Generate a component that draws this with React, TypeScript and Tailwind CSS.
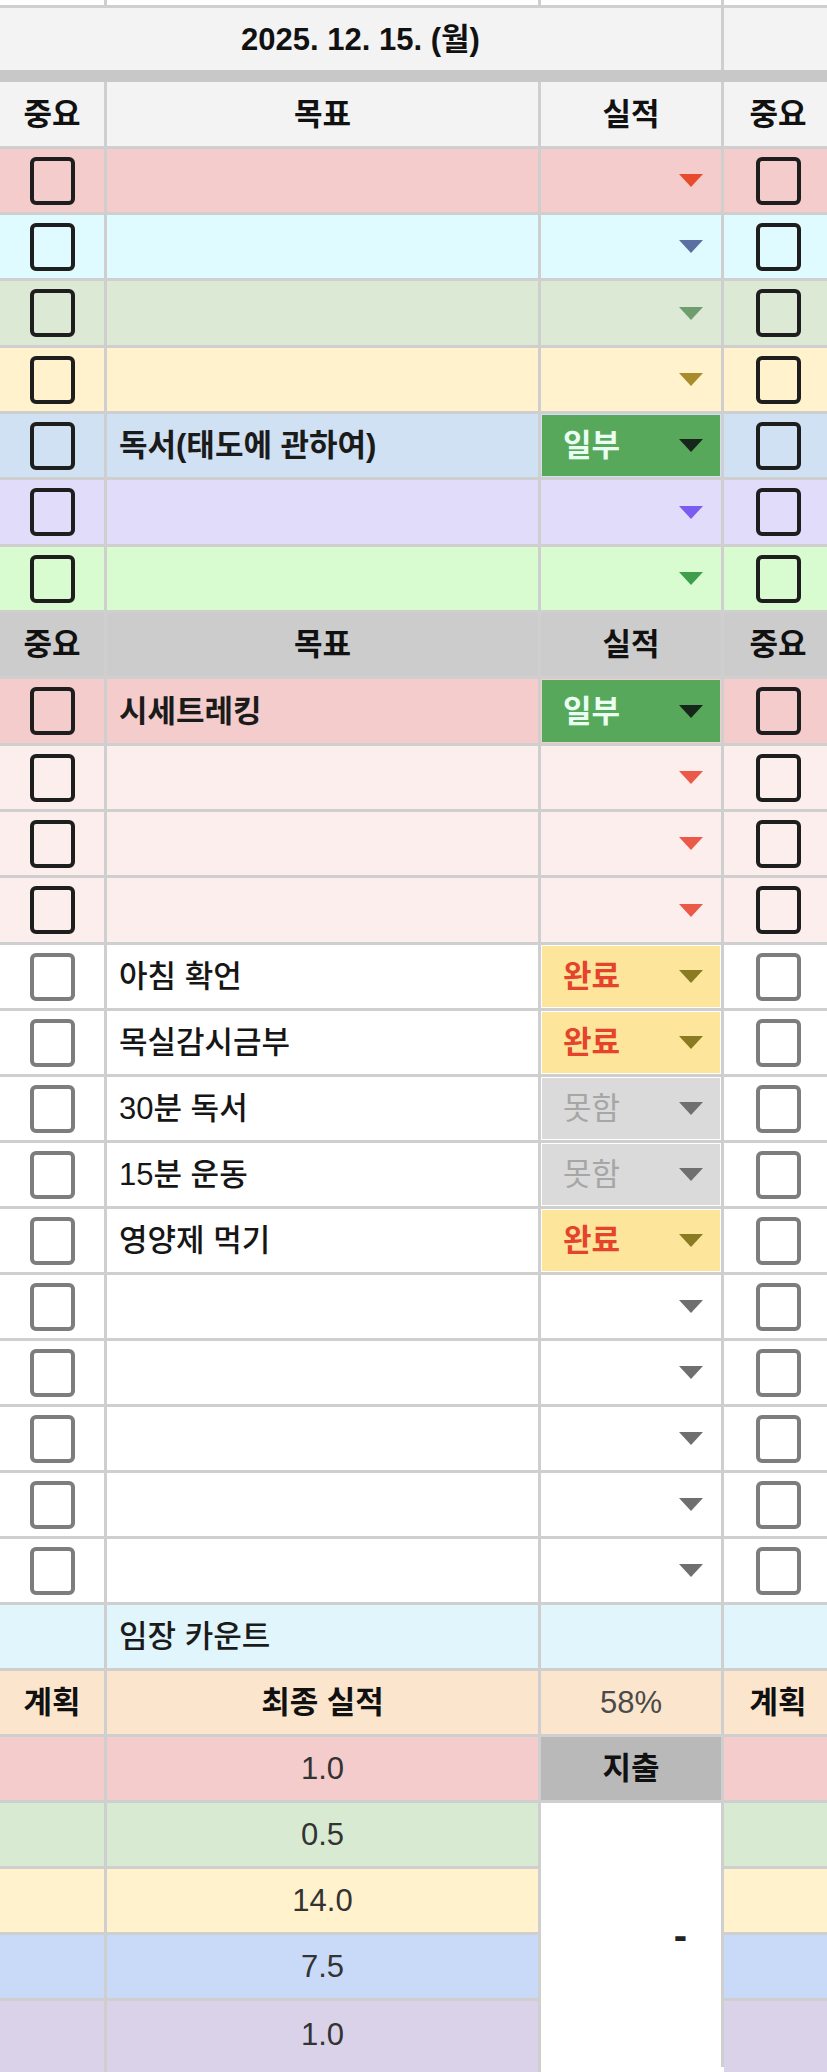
import React from "react";

const FONT = { fontFamily: '"Liberation Sans", "Noto Sans CJK KR", sans-serif' };

function Tri({ color }: { color: string }) {
  return (
    <svg width="24" height="13" viewBox="0 0 24 13" className="shrink-0">
      <polygon points="0,0 24,0 12,13" fill={color} />
    </svg>
  );
}

function Box({ dark }: { dark: boolean }) {
  return (
    <div
      className={
        dark
          ? "w-[45px] h-[48px] rounded-[6px] border-[4px] border-[#1e1e1e]"
          : "w-[45px] h-[48px] rounded-[6px] border-[4px] border-[#7d7d7d]"
      }
    />
  );
}

type Chip = "일부" | "완료" | "못함" | null;

function Status({ chip, tri }: { chip: Chip; tri: string }) {
  if (chip === "일부") {
    return (
      <div className="m-[1px] flex flex-1 items-center justify-between self-stretch bg-[#57a85b] pl-[21px] pr-[17px]">
        <span className="font-bold text-[#e9fff1]">일부</span>
        <Tri color="#16261a" />
      </div>
    );
  }
  if (chip === "완료") {
    return (
      <div className="m-[1px] flex flex-1 items-center justify-between self-stretch bg-[#fde69b] pl-[21px] pr-[17px]">
        <span className="font-bold text-[#e5432c]">완료</span>
        <Tri color="#8a7a22" />
      </div>
    );
  }
  if (chip === "못함") {
    return (
      <div className="m-[1px] flex flex-1 items-center justify-between self-stretch bg-[#dadada] pl-[21px] pr-[17px]">
        <span className="text-[#a6a6a6]">못함</span>
        <Tri color="#6f6f6f" />
      </div>
    );
  }
  return (
    <div className="m-[1px] flex flex-1 items-center justify-end self-stretch pr-[17px]">
      <Tri color={tri} />
    </div>
  );
}

type TaskRow = {
  h: string;
  bg: string;
  text?: string;
  bold?: boolean;
  chip?: Chip;
  tri: string;
  dark: boolean;
};

function Task({ r }: { r: TaskRow }) {
  return (
    <div className={`flex border-b-[3px] border-[#cfcfcf] ${r.h} ${r.bg}`}>
      <div className="flex w-[107px] shrink-0 items-center justify-center border-r-[3px] border-[#cfcfcf]">
        <Box dark={r.dark} />
      </div>
      <div className="flex w-[434px] shrink-0 items-center border-r-[3px] border-[#cfcfcf] pl-[12px]">
        <span className={r.bold ? "font-bold text-[#1b1b1b]" : "font-medium text-[#161616]"}>{r.text ?? ""}</span>
      </div>
      <div className="flex w-[183px] shrink-0 items-center border-r-[3px] border-[#cfcfcf]">
        <Status chip={r.chip ?? null} tri={r.tri} />
      </div>
      <div className="flex w-[108px] shrink-0 items-center justify-center">
        <Box dark={r.dark} />
      </div>
    </div>
  );
}

function Header({ bg, h }: { bg: string; h: string }) {
  return (
    <div className={`flex border-b-[3px] border-[#cfcfcf] font-bold text-[#111] ${h} ${bg}`}>
      <div className="flex w-[107px] shrink-0 items-center justify-center border-r-[3px] border-[#cfcfcf]">중요</div>
      <div className="flex w-[434px] shrink-0 items-center justify-center border-r-[3px] border-[#cfcfcf]">목표</div>
      <div className="flex w-[183px] shrink-0 items-center justify-center border-r-[3px] border-[#cfcfcf]">실적</div>
      <div className="flex w-[108px] shrink-0 items-center justify-center">중요</div>
    </div>
  );
}

const top: TaskRow[] = [
  { h: "h-[66px]", bg: "bg-[#f4cccc]", tri: "#e84a2e", dark: true },
  { h: "h-[66px]", bg: "bg-[#e0fbff]", tri: "#5b6fa3", dark: true },
  { h: "h-[67px]", bg: "bg-[#dce9d5]", tri: "#6e9e6e", dark: true },
  { h: "h-[66px]", bg: "bg-[#fff2cc]", tri: "#a88c2c", dark: true },
  { h: "h-[66px]", bg: "bg-[#d0e1f3]", text: "독서(태도에 관하여)", bold: true, chip: "일부", tri: "#000", dark: true },
  { h: "h-[67px]", bg: "bg-[#e2dcfb]", tri: "#7b5cf0", dark: true },
  { h: "h-[66px]", bg: "bg-[#d8fcd0]", tri: "#3f9e4c", dark: true },
];

const mid: TaskRow[] = [
  { h: "h-[67px]", bg: "bg-[#f4cccc]", text: "시세트레킹", bold: true, chip: "일부", tri: "#000", dark: true },
  { h: "h-[66px]", bg: "bg-[#fdeeee]", tri: "#eb5a48", dark: true },
  { h: "h-[66px]", bg: "bg-[#fdeeee]", tri: "#eb5a48", dark: true },
  { h: "h-[67px]", bg: "bg-[#fdeeee]", tri: "#eb5a48", dark: true },
];

const tasks: TaskRow[] = [
  { h: "h-[66px]", bg: "bg-white", text: "아침 확언", chip: "완료", tri: "#6f6f6f", dark: false },
  { h: "h-[66px]", bg: "bg-white", text: "목실감시금부", chip: "완료", tri: "#6f6f6f", dark: false },
  { h: "h-[66px]", bg: "bg-white", text: "30분 독서", chip: "못함", tri: "#6f6f6f", dark: false },
  { h: "h-[66px]", bg: "bg-white", text: "15분 운동", chip: "못함", tri: "#6f6f6f", dark: false },
  { h: "h-[66px]", bg: "bg-white", text: "영양제 먹기", chip: "완료", tri: "#6f6f6f", dark: false },
  { h: "h-[66px]", bg: "bg-white", tri: "#6f6f6f", dark: false },
  { h: "h-[66px]", bg: "bg-white", tri: "#6f6f6f", dark: false },
  { h: "h-[66px]", bg: "bg-white", tri: "#6f6f6f", dark: false },
  { h: "h-[66px]", bg: "bg-white", tri: "#6f6f6f", dark: false },
  { h: "h-[66px]", bg: "bg-white", tri: "#6f6f6f", dark: false },
];

export default function App() {
  return (
    <div style={FONT} className="w-[827px] h-[2072px] overflow-hidden bg-white text-[31px] leading-none text-[#1b1b1b]">
      <div className="w-[900px]">
        {/* partial top row */}
        <div className="flex h-[8px] border-b-[3px] border-[#cfcfcf] bg-white">
          <div className="w-[107px] shrink-0 border-r-[3px] border-[#cfcfcf]" />
          <div className="w-[434px] shrink-0 border-r-[3px] border-[#cfcfcf]" />
          <div className="w-[183px] shrink-0 border-r-[3px] border-[#cfcfcf]" />
          <div className="w-[108px] shrink-0" />
        </div>
        {/* date row */}
        <div className="flex h-[62px] bg-[#f3f3f3]">
          <div className="flex w-[724px] shrink-0 items-center justify-center border-r-[3px] border-[#cfcfcf] font-bold text-[#111]">
            2025. 12. 15. (월)
          </div>
          <div className="w-[108px] shrink-0" />
        </div>
        {/* freeze bar */}
        <div className="h-[12px] bg-[#c8c8c8]" />
        <Header bg="bg-[#f3f3f3]" h="h-[67px]" />
        {top.map((r, i) => (
          <Task key={"t" + i} r={r} />
        ))}
        <Header bg="bg-[#cccccc]" h="h-[66px]" />
        {mid.map((r, i) => (
          <Task key={"m" + i} r={r} />
        ))}
        {tasks.map((r, i) => (
          <Task key={"k" + i} r={r} />
        ))}
        {/* 임장 카운트 */}
        <div className="flex h-[66px] border-b-[3px] border-[#cfcfcf] bg-[#e0f6fc]">
          <div className="w-[107px] shrink-0 border-r-[3px] border-[#cfcfcf]" />
          <div className="flex w-[434px] shrink-0 items-center border-r-[3px] border-[#cfcfcf] pl-[12px] font-medium">
            임장 카운트
          </div>
          <div className="w-[183px] shrink-0 border-r-[3px] border-[#cfcfcf]" />
          <div className="w-[108px] shrink-0" />
        </div>
        {/* 계획 row */}
        <div className="flex h-[66px] border-b-[3px] border-[#cfcfcf] bg-[#fce5cd]">
          <div className="flex w-[107px] shrink-0 items-center justify-center border-r-[3px] border-[#cfcfcf] font-bold text-[#111]">
            계획
          </div>
          <div className="flex w-[434px] shrink-0 items-center justify-center border-r-[3px] border-[#cfcfcf] font-bold text-[#111]">
            최종 실적
          </div>
          <div className="flex w-[183px] shrink-0 items-center justify-center border-r-[3px] border-[#cfcfcf] text-[#4a4a4a]">
            58%
          </div>
          <div className="flex w-[108px] shrink-0 items-center justify-center font-bold text-[#111]">계획</div>
        </div>
        {/* 1.0 / 지출 row */}
        <div className="flex h-[66px] border-b-[3px] border-[#cfcfcf] bg-[#f4cccc]">
          <div className="w-[107px] shrink-0 border-r-[3px] border-[#cfcfcf]" />
          <div className="flex w-[434px] shrink-0 items-center justify-center border-r-[3px] border-[#cfcfcf] text-[#333]">
            1.0
          </div>
          <div className="flex w-[183px] shrink-0 items-center justify-center border-r-[3px] border-[#cfcfcf] bg-[#b9b9b9] font-bold text-[#111]">
            지출
          </div>
          <div className="w-[108px] shrink-0" />
        </div>
        {/* merged bottom block */}
        <div className="grid grid-cols-[107px_434px_183px_108px] grid-rows-[66px_66px_66px_80px]">
          <div className="col-start-1 row-start-1 border-b-[3px] border-r-[3px] border-[#cfcfcf] bg-[#d9ead3]" />
          <div className="col-start-2 row-start-1 flex items-center justify-center border-b-[3px] border-r-[3px] border-[#cfcfcf] bg-[#d9ead3] text-[#333]">
            0.5
          </div>
          <div className="col-start-4 row-start-1 border-b-[3px] border-[#cfcfcf] bg-[#d9ead3]" />

          <div className="col-start-1 row-start-2 border-b-[3px] border-r-[3px] border-[#cfcfcf] bg-[#fff2cc]" />
          <div className="col-start-2 row-start-2 flex items-center justify-center border-b-[3px] border-r-[3px] border-[#cfcfcf] bg-[#fff2cc] text-[#333]">
            14.0
          </div>
          <div className="col-start-4 row-start-2 border-b-[3px] border-[#cfcfcf] bg-[#fff2cc]" />

          <div className="col-start-1 row-start-3 border-b-[3px] border-r-[3px] border-[#cfcfcf] bg-[#c9daf8]" />
          <div className="col-start-2 row-start-3 flex items-center justify-center border-b-[3px] border-r-[3px] border-[#cfcfcf] bg-[#c9daf8] text-[#333]">
            7.5
          </div>
          <div className="col-start-4 row-start-3 border-b-[3px] border-[#cfcfcf] bg-[#c9daf8]" />

          <div className="col-start-1 row-start-4 border-r-[3px] border-[#cfcfcf] bg-[#d9d2e9]" />
          <div className="col-start-2 row-start-4 flex items-start justify-center border-r-[3px] border-[#cfcfcf] bg-[#d9d2e9] pt-[18px] text-[#333]">
            1.0
          </div>
          <div className="col-start-4 row-start-4 bg-[#d9d2e9]" />

          <div className="col-start-3 row-start-1 row-span-4 flex h-[264px] items-center justify-end border-r-[3px] border-[#cfcfcf] bg-white pr-[34px] text-[40px] font-bold text-[#222]">
            -
          </div>
        </div>
      </div>
    </div>
  );
}
